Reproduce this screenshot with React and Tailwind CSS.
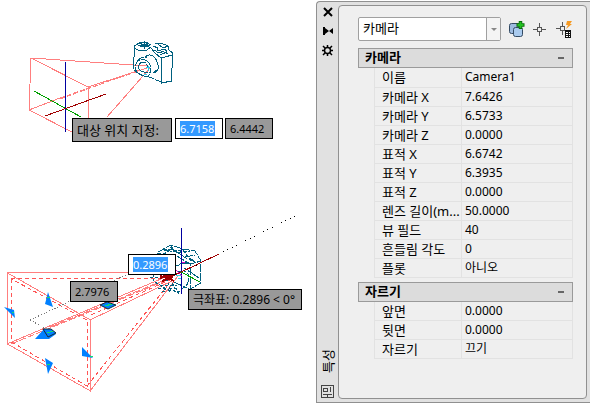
import React, { useState } from "react";

const cameraRows = [
    ["이름", "Camera1"],
    ["카메라 X", "7.6426"],
    ["카메라 Y", "6.5733"],
    ["카메라 Z", "0.0000"],
    ["표적 X", "6.6742"],
    ["표적 Y", "6.3935"],
    ["표적 Z", "0.0000"],
    ["렌즈 길이(m...", "50.0000"],
    ["뷰 필드", "40"],
    ["흔들림 각도", "0"],
    ["플롯", "아니오"],
];

const clipRows = [
    ["앞면", "0.0000"],
    ["뒷면", "0.0000"],
    ["자르기", "끄기"],
];

const CameraGlyph = () => (
    <g stroke="#00607f" fill="none">
        <path d="M134.500 46 L133.500 69 M134 46 L141 42 L146 42 L151 45 M134 48 L140 51 L147 50 L151 47" />
        <path d="M139 43 L149 47 M140 47 L148 43 M144 41 V49 M141 44 h6 v2 h-6 z M138 45 h12" />
        <path d="M155 44 L161 43 L168 46 L168 49 L172.500 53 V55 L171.500 81 L161.500 83 V58 L172 55" />
        <path d="M151 48 L155 53 L161 58 M153 46 L158 48 L157 51 L165 49 L167 52 L160 55 M158 44 L163 48 L168 46 M164 52 L168 54 M154 50 L159 53 L164 51" />
        <path d="M145 57 C149 53 155 55 157 62 C160 69 157 74 153 72" />
        <path d="M136 64 C138 58 145 58 149 63 C152 67 151 74 147 77 L142 75 C137 74 134 69 136 64 Z" strokeDasharray="6 1" />
        <path d="M139 65 C141 60 147 62 148 67 C150 72 147 74 144 72 C140 71 137 69 139 65 Z M137 61 L142 57 L147 58 M134 70 L142 76 M147 76 L161 82 M153 73 L157 70" strokeDasharray="8 1" />
        <path d="M146 67 h4 M148.500 66 v5 M144 74 h3" stroke="#28c8e8" />
    </g>
);

const Drawing = () => (
    <svg className="block" width="312" height="400" viewBox="0 0 312 400" fill="none" shapeRendering="crispEdges" aria-hidden="true">
        {/* upper view */}
        <g stroke="#ff7f7f">
            <path d="M31 58 L29 110 L72 132 M31 58 L88 87 V118 M31 58 L148 66 M88 87 L150 67 M29 110 L60 98 M107 117 L150 68" />
            <path d="M60 98 L150 67 M60 99 L120 77" strokeDasharray="5 2" />
        </g>
        <CameraGlyph />
        <path d="M65.500 62 V132" stroke="#0000a0" />
        <path d="M34 91 L81 117" stroke="#00a000" />
        <path d="M45 116 L106 94" stroke="#a00000" />

        {/* lower view */}
        <g stroke="#ff7f7f">
            <path d="M7.500 273 V344 L90.500 391 V320 Z M7 273 L160 272 M90 391 L178 276 M90 320 L174 280 M7 344 L168 276" />
            <path d="M11 344 L170 279 M50 327 L172 277" strokeDasharray="7 2" />
        </g>
        <g stroke="#ff5555" strokeDasharray="4 3">
            <path d="M11.500 279 V342 L87 386 V320 Z M11 279 L165 278 M87 386 L172 280 M91 315 L172 279" />
        </g>
        <path d="M30 320 L128 274 M30 320 L50 331" stroke="#777" strokeDasharray="1 2" />
        <path d="M187 270 L297 215" stroke="#000" strokeDasharray="1 4" />
        <g shapeRendering="auto">
            <path d="M4 307 L14 310 L15 318 Z M48 292 L53 307 L45 304 Z M82 347 L93 358 L82 356 Z M45 358 L53 363 L48 374 Z M35 339 L44 329 L56 334 L49 339 Z" fill="#0080ff" />
            <path d="M43 329 L51 329 L56 333 L48 337 Z M100 305 L107 302 L116 305 L108 309 Z" fill="#0080ff" stroke="#112a3a" />
        </g>
        <path d="M47 333 L53 331 M105 306 L112 304 M47 297 h3 M12 312 h2 M90 356 h3 M47 364 h3" stroke="#10e070" />
        <g stroke="#00607f">
            <path d="M158 252 L171 245 L183 249 L195 251 L201 261 L200.500 283 L190.500 289 V264 L201 261 M171 245 L175 253 M183 249 L178 254 M164 250 L182 253 M177 256 L190 264 M185 257 L195 255 M190 258 L197 264 M180 263 h10" strokeDasharray="8 1" />
            <path d="M157 253 L175 258 M158 257 L173 249 M163 249 L190 252 M170 247 L187 259 M183 250 L192 262 M178 272 C192 266 192 286 181 289 M174 282 L189 289 M176 266 L188 262 M184 268 L199 278" strokeDasharray="4 1" />
            <path d="M150 277 h8 M153.500 274 v7 M155 282 L171 292 M158 288 L180 292 M166 278 L171 290 M169 288 h8 M160 285 h17 M172 283 L179 294 M162 291 h5" strokeDasharray="3 2" />
        </g>
        <path d="M160 278 L177 274 M162 274 L174 281 M162 281 L173 277 M160 276 L171 279" stroke="#a00000" strokeWidth="2" />
        <path d="M181.500 228 V294" stroke="#0000a0" />
        <path d="M177 274 L219 254" stroke="#a00000" />
        <path d="M181 272 L200 282" stroke="#00a000" />
        <path d="M176 270 L182 276 M182 262 h3" stroke="#e000c0" />
        <path d="M176 275 h5 M178 278 h3" stroke="#30d8e8" />
    </svg>
);

const tip = "absolute border border-black bg-[#999] px-1 text-black whitespace-nowrap";

const CoordInput = ({ label, start, className }) => {
    const [value, setValue] = useState(start);
    return (
        <div className={`absolute flex h-[21px] w-12 items-center border border-black bg-white px-1 ${className}`}>
            <input
                aria-label={label}
                value={value}
                onChange={(e) => setValue(e.target.value)}
                className="h-[15px] w-[35px] bg-[#3399ff] text-[11px] text-white outline-none"
            />
        </div>
    );
};

const Section = ({ title, rows }) => {
    const [open, setOpen] = useState(true);
    return (
        <section>
            <h2>
                <button
                    onClick={() => setOpen(!open)}
                    aria-expanded={open}
                    className="flex h-5 w-full items-center justify-between border border-[#9a9a9a] bg-[#dcdcdc] pl-1.5 pr-2 text-[13px] font-bold"
                >
                    {title}
                    <span className="h-0.5 w-1.5 bg-[#666]"></span>
                </button>
            </h2>
            {open &&
                <div className="pl-4">
                    <table className="w-full table-fixed border-collapse">
                        <tbody>
                            {rows.map(([name, value]) => (
                                <tr key={name} className="h-[19px]">
                                    <th scope="row" className="w-[87px] border border-t-0 border-[#e2e2e2] p-0 pl-[7px] text-left text-[13px] leading-[18px] font-normal whitespace-nowrap">{name}</th>
                                    <td className="border border-t-0 border-[#e2e2e2] p-0 pl-[3px] leading-[18px]">{value}</td>
                                </tr>
                            ))}
                        </tbody>
                    </table>
                </div>
            }
        </section>
    );
};

const App = () => {
    return (
        <main className="flex min-h-screen bg-white font-['Noto_Sans','Noto_Sans_CJK_KR',sans-serif] text-xs text-black">
            <div className="relative min-w-0 flex-1 overflow-hidden">
                <Drawing />
                <div className={`${tip} left-[72px] top-[118px] h-6 w-[100px] text-[13px] leading-[22px]`}>대상 위치 지정:</div>
                <CoordInput label="X" start="6.7158" className="left-[175px] top-[118px]" />
                <div className={`${tip} left-[225px] top-[118px] h-[21px] w-12 text-[11px] leading-[19px]`}>6.4442</div>
                <CoordInput label="거리" start="0.2896" className="left-[128px] top-[254px]" />
                <div className={`${tip} left-[70px] top-[281px] h-[21px] w-12 text-[11px] leading-[19px]`}>2.7976</div>
                <div className={`${tip} left-[188px] top-[289px] h-[21px] w-[114px] leading-[19px]`}>극좌표: 0.2896 &lt; 0°</div>
            </div>

            <aside className="my-px flex w-[274px] shrink-0 rounded-tl border border-r-0 border-[#909090] bg-[#e1e1e1]">
                <div className="flex w-[21px] flex-col items-center pt-[5px] pb-1">
                    <button aria-label="닫기" className="flex h-[19px] w-4 justify-center">
                        <svg width="10" height="10" viewBox="0 0 10 10"><path d="M1 1 L9 9 M9 1 L1 9" stroke="#000" strokeWidth="2" /></svg>
                    </button>
                    <button aria-label="자동 숨기기" className="flex h-[19px] w-4 justify-center">
                        <svg width="10" height="10" viewBox="0 0 10 10"><path d="M0 1h2v8h-2z M2 2 L6 5 L2 8 Z M10 2 L6 5 L10 8 Z" fill="#000" /></svg>
                    </button>
                    <button aria-label="설정" className="flex h-[19px] w-4 justify-center">
                        <svg width="11" height="11" viewBox="0 0 11 11" fill="none" stroke="#000">
                            <circle cx="5.5" cy="5.5" r="3" strokeWidth="1.5" />
                            <path d="M5.500 0v2 M5.500 9v2 M0 5.500h2 M9 5.500h2 M1 1l2 2 M8 8l2 2 M10 1l-2 2 M3 8l-2 2" strokeWidth="1.5" />
                        </svg>
                    </button>
                    <div className="mt-auto mb-3 rotate-180 text-[13px] leading-4 [writing-mode:vertical-rl] [text-orientation:sideways]">특성</div>
                    <svg width="13" height="13" viewBox="0 0 13 13" fill="none" stroke="#444" shapeRendering="crispEdges">
                        <path d="M.5 .5h12v12H.5z M2.500 3.500h4v3h-4z M9.500 2v5 M2 9.500h9 M6.500 9v3" />
                    </svg>
                </div>

                <div className="my-[3px] mr-[3px] flex min-w-0 flex-1 flex-col rounded border border-[#909090] bg-[#efefef] pt-[11px] pr-[13px] pl-[19px]">
                    <div className="flex items-center">
                        <div className="relative mr-2 h-6 w-[143px] shrink-0">
                            <select aria-label="객체 유형" className="h-full w-full appearance-none rounded-xs border border-[#a0a0a0] bg-white pl-1 text-[13px]">
                                <option>카메라</option>
                            </select>
                            <span className="pointer-events-none absolute inset-y-px right-px flex w-3.5 items-center justify-center border-l border-[#a0a0a0] bg-[#f4f4f4]">
                                <svg width="6" height="3" viewBox="0 0 6 3"><path d="M0 0h6L3 3z" fill="#888" /></svg>
                            </span>
                        </div>
                        <button aria-label="객체 선택 추가" className="mr-2">
                            <svg width="16" height="16" viewBox="0 0 16 16" fill="none">
                                <rect x=".5" y="2.500" width="10" height="10" rx="2" fill="#9dbbe0" stroke="#334a63" />
                                <rect x="4.500" y="6.500" width="9" height="9" rx="2" fill="#a9caee" stroke="#334a63" />
                                <path d="M11.500 0v8 M7.500 4h8" stroke="#0a6b0a" strokeWidth="3.500" />
                                <path d="M11.500 1v6 M8.500 4h6" stroke="#22c022" strokeWidth="2" />
                            </svg>
                        </button>
                        <button aria-label="객체 선택" className="mr-2.5">
                            <svg width="13" height="13" viewBox="0 0 13 13" fill="none" stroke="#555" shapeRendering="crispEdges">
                                <path d="M6.500 0v4 M6.500 9v4 M0 6.500h4 M9 6.500h4 M4.500 4.500h4v4h-4z" />
                            </svg>
                        </button>
                        <button aria-label="신속 선택">
                            <svg width="17" height="17" viewBox="0 0 17 17" fill="none">
                                <path d="M6.500 1v5 M6.500 9v5 M0 7.500h5 M4.500 5.500h4v4h-4z" stroke="#555" shapeRendering="crispEdges" />
                                <path d="M11 0h5l-2 3h2l-6 5 2-4h-2z" fill="#f59a23" />
                                <path d="M9 9h6v8H9z" fill="#111" />
                                <path d="M10 11.500h2 M13 11.500h1 M10 13.500h2 M13 13.500h1 M10 15.500h2 M13 15.500h1" stroke="#fff" shapeRendering="crispEdges" />
                            </svg>
                        </button>
                    </div>
                    <div className="mt-[7px] flex flex-col gap-1">
                        <Section title="카메라" rows={cameraRows} />
                        <Section title="자르기" rows={clipRows} />
                    </div>
                </div>
            </aside>
        </main>
    );
};

export default App;
